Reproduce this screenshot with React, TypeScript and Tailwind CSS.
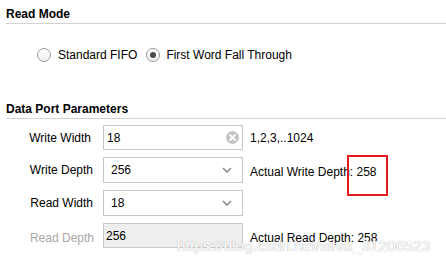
import React from "react"

// Small helpers for the form widgets
function Radio({ checked }: { checked?: boolean }) {
  return (
    <span className="flex items-center justify-center w-[14px] h-[14px] rounded-full border border-[#9a9a9a] bg-gradient-to-b from-white to-[#f0f0f0]">
      {checked && <span className="w-[6px] h-[6px] rounded-full bg-[#4a4a4a]" />}
    </span>
  )
}

function Chevron() {
  return (
    <svg width="10" height="6" viewBox="0 0 10 6" className="mr-[10px]">
      <path d="M1 1 L5 5 L9 1" fill="none" stroke="#8a8a8a" strokeWidth="1.6" />
    </svg>
  )
}

function ClearIcon() {
  return (
    <svg width="13" height="13" viewBox="0 0 13 13" className="mr-[3px]">
      <circle cx="6.5" cy="6.5" r="6.5" fill="#c4c4c4" />
      <path d="M4 4 L9 9 M9 4 L4 9" stroke="#fff" strokeWidth="1.8" strokeLinecap="round" />
    </svg>
  )
}

export default function App() {
  return (
    <div className="relative w-[446px] h-[263px] bg-white overflow-hidden text-[12px] leading-[14px] text-black font-['Liberation_Sans',Arial,sans-serif]">
      {/* Read Mode */}
      <div className="pl-[6px] pt-[7px] font-bold">Read Mode</div>
      <div className="mt-[2px] ml-[6px] h-px bg-[#d2d2d2]" />
      <div className="mt-[24px] flex items-center h-[14px] pl-[37px]">
        <Radio />
        <span className="ml-[7px]">Standard FIFO</span>
        <span className="ml-[9px]">
          <Radio checked />
        </span>
        <span className="ml-[6px]">First Word Fall Through</span>
      </div>

      {/* Data Port Parameters */}
      <div className="mt-[40px] pl-[6px] font-bold">Data Port Parameters</div>
      <div className="mt-[2px] ml-[6px] h-px bg-[#d2d2d2]" />

      <div className="mt-[6px] flex flex-col gap-[7px]">
        <div className="flex items-center h-[25px]">
          <span className="w-[91px] text-right">Write Width</span>
          <div className="ml-[12px] w-[140px] h-full flex items-center justify-between border border-[#c6c6c6] bg-white pl-[3px]">
            <span>18</span>
            <ClearIcon />
          </div>
          <span className="ml-[7px]">1,2,3,..1024</span>
        </div>
        <div className="flex items-center h-[26px]">
          <span className="w-[93px] text-right">Write Depth</span>
          <div className="ml-[10px] w-[140px] h-full flex items-center justify-between border border-[#c6c6c6] bg-white pl-[7px]">
            <span>256</span>
            <Chevron />
          </div>
          <span className="ml-[7px] pt-[3px]">Actual Write Depth: 258</span>
        </div>
        <div className="flex items-center h-[26px]">
          <span className="w-[93px] text-right">Read Width</span>
          <div className="ml-[10px] w-[140px] h-full flex items-center justify-between border border-[#c6c6c6] bg-white pl-[7px]">
            <span>18</span>
            <Chevron />
          </div>
        </div>
        <div className="flex items-center h-[25px]">
          <span className="w-[94px] text-right text-[#a8a8a8] pt-[4px]">Read Depth</span>
          <div className="ml-[9px] w-[140px] h-full flex items-center border border-[#c8c8c8] bg-[#eeeeee] pl-[2px]">
            <span>256</span>
          </div>
          <span className="ml-[7px] pt-[4px]">Actual Read Depth: 258</span>
        </div>
      </div>

      {/* highlight box drawn over the screenshot */}
      <div className="absolute left-[347px] top-[155px] w-[41px] h-[41px] border-2 border-[#e3191c]" />

      {/* watermark */}
      <div className="absolute left-[177px] top-[237px] text-[15.5px] leading-[18px] text-white [text-shadow:0_0_1px_#b0b0b0,0_0_1px_#c0c0c0]">
        https://blog.csdn.net/sinat_31206523
      </div>
    </div>
  )
}
